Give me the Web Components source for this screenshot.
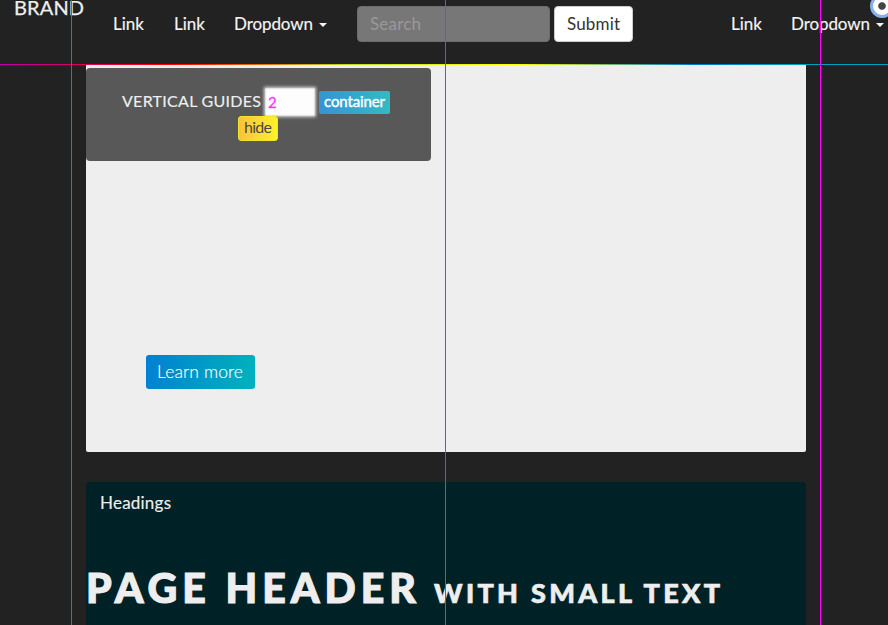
<!DOCTYPE html>
<html lang="en"><head><meta charset="utf-8"><title>Brand</title>
<style>
html,body{margin:0;background:#222}
body{width:888px;height:625px;overflow:hidden;font:16px/20px Lato,"Liberation Sans",sans-serif;color:#eee}
</style></head><body>
<demo-page></demo-page>
<script>
const define=(name,html,after)=>customElements.define(name,class extends HTMLElement{
  connectedCallback(){
    if(this.shadowRoot)return;
    const t=document.createElement('template');t.innerHTML=html;
    this.attachShadow({mode:'open'}).append(t.content.cloneNode(true));
    if(after)after(this,this.shadowRoot);
  }
});

// A label tracked so that its run of text fills the width in its "w" attribute.
define('fit-label',`<style>:host{display:block;flex:none;white-space:nowrap}span{display:inline-block;white-space:nowrap}</style><span></span>`,(el,root)=>{
  const s=root.querySelector('span'),w=+el.getAttribute('w'),text=el.getAttribute('text');
  s.textContent=text;
  el.style.width=w+'px';
  s.style.letterSpacing=(w-s.getBoundingClientRect().width)/(text.length-1)+'px';
});

define('nav-link',`<style>:host{display:flex;align-items:center;flex:none;color:#f4f4f4;font-size:17px;-webkit-text-stroke:.15px #f4f4f4}
:host([caret])::after{content:"";margin:2px 0 0 6px;border:4px solid transparent;border-top-color:currentColor;border-bottom:0}</style><slot></slot>`);

define('search-form',`<style>:host{display:flex;gap:4px;flex:none;margin-top:6px;font-size:17px}
div{box-sizing:border-box;height:36px;border-radius:4px;display:flex;align-items:center;padding:0 12px}
.q{width:193px;background:#777;border:1px solid #6d6d6d;color:#999}
.s{width:79px;background:#fff;border:1px solid #ccc;color:#333}</style>
<div class="q"><fit-label w="51" text="Search"></fit-label></div><div class="s"><fit-label w="53" text="Submit"></fit-label></div>`);

define('nav-bar',`<style>:host{display:flex;height:64px;align-items:flex-start}
.brand{font-size:20px;line-height:15px;margin:0 0 0 14px;width:99px;color:#eee;-webkit-text-stroke:.25px #eee;flex:none}
nav-link{margin-top:14px}.g{margin-left:30px}.d{margin-left:29px}search-form{margin-left:30px}.r{margin-left:98px}</style>
<div class="brand"><fit-label w="70" text="BRAND"></fit-label></div>
<nav-link><fit-label w="31" text="Link"></fit-label></nav-link>
<nav-link class="g"><fit-label w="31" text="Link"></fit-label></nav-link>
<nav-link class="d" caret><fit-label w="79" text="Dropdown"></fit-label></nav-link>
<search-form></search-form>
<nav-link class="r"><fit-label w="31" text="Link"></fit-label></nav-link>
<nav-link class="d" caret><fit-label w="79" text="Dropdown"></fit-label></nav-link>`);

define('guide-panel',`<style>:host{display:block;box-sizing:border-box;width:345px;height:93px;background:#585858;border-radius:4px;padding-top:20px}
.row{display:flex;padding-left:36px}
.t{margin:3px 4px 0 0;-webkit-text-stroke:.15px #eee}
.n{box-sizing:border-box;width:50px;height:28px;background:#fdfdfd;color:#f3f;padding:4px 3px;font-size:15px;-webkit-text-stroke:.3px #f3f;box-shadow:0 0 3px 1px #ddd,inset 0 0 2px #999}
.c{box-sizing:border-box;width:71px;height:23px;margin:3px 0 0 4px;padding:0 5px;border-radius:2px;background:linear-gradient(90deg,#3494d4,#32bbc3);color:#fff;-webkit-text-stroke:.4px #fff;font-size:15px}
.h{box-sizing:border-box;position:relative;width:40px;height:25px;margin:0 0 0 152px;border:1px solid #f3e52b;border-radius:3px;background:linear-gradient(90deg,#fbc13d,#fff22c);color:#4a4a40;padding:0 5px}</style>
<div class="row"><fit-label class="t" w="139" text="VERTICAL GUIDES"></fit-label><div class="n">2</div><div class="c"><fit-label w="61" text="container"></fit-label></div></div>
<div class="h"><fit-label w="28" text="hide"></fit-label></div>`);

define('hero-box',`<style>:host{display:block;box-sizing:border-box;margin:0 82px 0 86px;height:387px;padding-top:3px;background:#eee;border-radius:0 0 2px 2px}
.b{box-sizing:border-box;width:109px;height:34px;margin:194px 0 0 60px;padding:7px 12px 5px 11px;border-radius:3px;background:linear-gradient(100deg,#0080d2,#00b3bb);color:#fff;font-weight:300;font-size:17.5px;-webkit-text-stroke:.15px #fff}</style>
<guide-panel></guide-panel><div class="b"><fit-label w="86" text="Learn more"></fit-label></div>`);

define('headings-box',`<style>:host{display:block;box-sizing:border-box;margin:30px 82px 0 86px;height:143px;padding-top:11px;background:#002226;border-radius:4px 4px 0 0}
.t{margin-left:14px;font-size:17px;-webkit-text-stroke:.15px #eee}
.h{display:flex;align-items:baseline;font-weight:900;font-size:41px;line-height:50px;padding:50px 0 0 0;-webkit-text-stroke:1.1px #eee}
.s{font-size:27px;margin-left:18px;-webkit-text-stroke:.7px #eee}</style>
<fit-label class="t" w="71" text="Headings"></fit-label>
<div class="h"><fit-label w="330" text="PAGE HEADER"></fit-label><fit-label class="s" w="286" text="WITH SMALL TEXT"></fit-label></div>`);

define('guide-lines',`<style>:host{position:absolute;inset:0;width:888px;height:625px;overflow:hidden;pointer-events:none}
i{position:absolute;top:0;width:1px;height:625px;background:#f0f}
b{position:absolute;left:870px;top:-6px;box-sizing:border-box;width:24px;height:24px;border:3px solid #82b1eb;border-radius:50%;background:radial-gradient(circle,#444 0 3.3px,#fff 4.3px)}</style>
<i style="left:71px"></i><i style="left:445px"></i><i style="left:820px"></i><b></b>`);

define('demo-page',`<style>:host{display:block;position:relative;width:888px;height:625px;overflow:hidden}
.line{height:1px;background:linear-gradient(90deg,#b0a 0,#f00 19%,#c0e020 40%,#ff0 58%,#0078c8 78%,#00a0c0 90%)}</style>
<nav-bar></nav-bar><div class="line"></div><hero-box></hero-box><headings-box></headings-box><guide-lines></guide-lines>`);
</script>
</body></html>
